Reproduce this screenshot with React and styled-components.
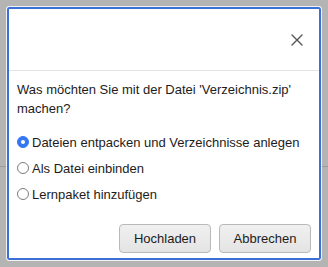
import styled, { createGlobalStyle } from 'styled-components';

const GlobalStyle = createGlobalStyle`
  html, body {
    margin: 0;
    padding: 0;
  }
  body {
    background: #b4b4b4;
    font-family: "Liberation Sans", Arial, sans-serif;
  }
`;

const Backdrop = styled.div`
  width: 328px;
  height: 267px;
  padding: 6px;
  box-sizing: border-box;
  background:
    linear-gradient(#9a9a9a, #9a9a9a) 0 166px / 100% 1px no-repeat,
    #b4b4b4;
`;

const Dialog = styled.div`
  height: 100%;
  box-sizing: border-box;
  background: #fff;
  border: 1px solid #f2f2f2;
  box-shadow: inset 0 0 0 2px #3c6fd8;
  border-radius: 3px;
  display: flex;
  flex-direction: column;
  padding: 2px;
`;

const Header = styled.div`
  height: 61px;
  border-bottom: 1px solid #e4e4e4;
  display: flex;
  align-items: center;
  justify-content: flex-end;
  padding-right: 15px;
`;

const CloseButton = styled.button`
  border: none;
  background: none;
  padding: 0;
  width: 14px;
  height: 14px;
  display: flex;
  align-items: center;
  justify-content: center;
  cursor: pointer;
`;

const Body = styled.div`
  flex: 1;
  padding: 9px 8px 0 8px;
  display: flex;
  flex-direction: column;
`;

const Question = styled.p`
  margin: 0 0 11px 0;
  font-size: 13px;
  line-height: 19px;
  color: #1c1c1c;
`;

const Options = styled.div`
  display: flex;
  flex-direction: column;
`;

const Option = styled.label`
  display: flex;
  align-items: center;
  gap: 3px;
  height: 26px;
  font-size: 13px;
  color: #1c1c1c;
`;

const Radio = styled.span`
  width: 12px;
  height: 12px;
  border-radius: 50%;
  box-sizing: border-box;
  border: 1px solid ${(p) => (p.$checked ? '#3477f5' : '#7d7d7d')};
  background: ${(p) => (p.$checked ? '#3477f5' : '#fff')};
  display: flex;
  align-items: center;
  justify-content: center;
  &::after {
    content: '';
    width: 4px;
    height: 4px;
    border-radius: 50%;
    background: ${(p) => (p.$checked ? '#fff' : 'transparent')};
  }
`;

const Footer = styled.div`
  margin-top: auto;
  display: flex;
  justify-content: flex-end;
  gap: 8px;
  padding: 0 0 5px 0;
`;

const Button = styled.button`
  width: 92px;
  height: 29px;
  font-family: "Liberation Sans", Arial, sans-serif;
  font-size: 13px;
  color: #1c1c1c;
  background: linear-gradient(#f0f0f0, #e4e4e4);
  border: 1px solid #b9b9b9;
  border-radius: 4px;
  cursor: pointer;
`;

const options = [
  { label: 'Dateien entpacken und Verzeichnisse anlegen', checked: true },
  { label: 'Als Datei einbinden', checked: false },
  { label: 'Lernpaket hinzufügen', checked: false },
];

export default function App() {
  return (
    <>
      <GlobalStyle />
      <Backdrop>
        <Dialog>
          <Header>
            <CloseButton aria-label="Schließen">
              <svg width="12" height="12" viewBox="0 0 12 12">
                <path d="M1 1L11 11M11 1L1 11" stroke="#555" strokeWidth="1.4" strokeLinecap="round" />
              </svg>
            </CloseButton>
          </Header>
          <Body>
            <Question>Was möchten Sie mit der Datei 'Verzeichnis.zip' machen?</Question>
            <Options>
              {options.map((o) => (
                <Option key={o.label}>
                  <Radio $checked={o.checked} />
                  {o.label}
                </Option>
              ))}
            </Options>
            <Footer>
              <Button>Hochladen</Button>
              <Button>Abbrechen</Button>
            </Footer>
          </Body>
        </Dialog>
      </Backdrop>
    </>
  );
}
